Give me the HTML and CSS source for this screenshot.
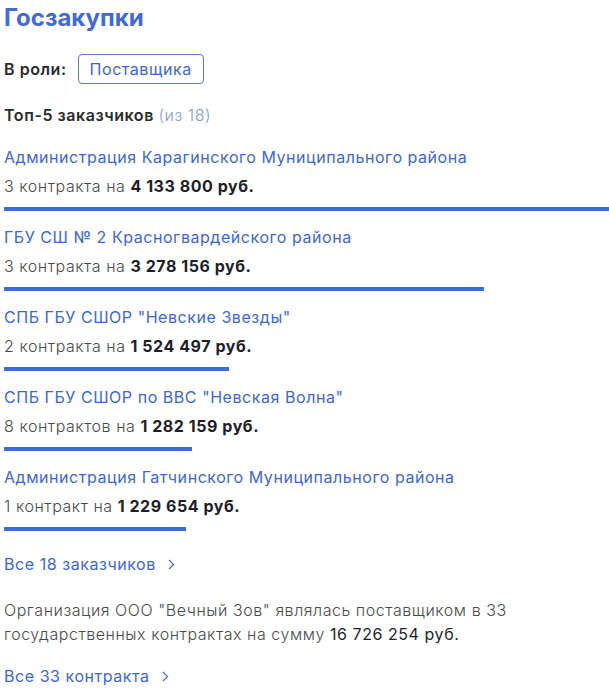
FILE: index.html
```html
<!DOCTYPE html>
<html lang="ru">
<head>
	<meta charset="UTF-8" />
	<meta name="viewport" content="width=device-width, initial-scale=1.0" />
	<title>Госзакупки</title>
	<link rel="stylesheet" href="styles.css">
</head>
<body>
	<div class="zak">
		<h2 class="zak-title">Госзакупки</h2>

		<div class="zak-role">
			<span class="zak-role-label">В роли:</span>
			<span class="zak-role-btn">Поставщика</span>
		</div>

		<div class="zak-top">Топ-5 заказчиков <span class="zak-top-count">(из 18)</span></div>

		<ul class="zak-list">
			<li>
				<a class="zak-name" href="#">Администрация Карагинского Муниципального района</a>
				<div class="zak-sum">3 контракта на <b>4 133 800 руб.</b></div>
				<div class="zak-bar" style="width: 605px"></div>
			</li>
			<li>
				<a class="zak-name" href="#">ГБУ СШ № 2 Красногвардейского района</a>
				<div class="zak-sum">3 контракта на <b>3 278 156 руб.</b></div>
				<div class="zak-bar" style="width: 480px"></div>
			</li>
			<li>
				<a class="zak-name" href="#">СПБ ГБУ СШОР "Невские Звезды"</a>
				<div class="zak-sum">2 контракта на <b>1 524 497 руб.</b></div>
				<div class="zak-bar" style="width: 225px"></div>
			</li>
			<li>
				<a class="zak-name" href="#">СПБ ГБУ СШОР по ВВС "Невская Волна"</a>
				<div class="zak-sum">8 контрактов на <b>1 282 159 руб.</b></div>
				<div class="zak-bar" style="width: 188px"></div>
			</li>
			<li>
				<a class="zak-name" href="#">Администрация Гатчинского Муниципального района</a>
				<div class="zak-sum">1 контракт на <b>1 229 654 руб.</b></div>
				<div class="zak-bar" style="width: 182px"></div>
			</li>
		</ul>

		<a class="zak-more" href="#">Все 18 заказчиков
			<svg width="7" height="11" viewBox="0 0 7 11"><path d="M1 1l4.5 4.5L1 10" fill="none" stroke="#4a6fd6" stroke-width="1.2"/></svg>
		</a>

		<p class="zak-text">Организация ООО "Вечный Зов" являлась поставщиком в 33 государственных контрактах на сумму <span class="zak-dark">16 726 254 руб.</span></p>

		<a class="zak-more zak-more-last" href="#">Все 33 контракта
			<svg width="7" height="11" viewBox="0 0 7 11"><path d="M1 1l4.5 4.5L1 10" fill="none" stroke="#4a6fd6" stroke-width="1.2"/></svg>
		</a>
	</div>
</body>
</html>
```

FILE: styles.css
```css
*{padding: 0;margin: 0;box-sizing: border-box;}
body{font-family: Inter, "Noto Sans", sans-serif;font-size: 16px;line-height: 24px;letter-spacing: 0.55px;color: #4a4a4a;background: #fff;}
a{text-decoration: none;color: #3d67d3;}
.zak{padding: 3px 0 0 4px;}
.zak-title{font-size: 24px;line-height: 30px;font-weight: 700;letter-spacing: 0;color: #3f6bd6;}
.zak-role{display: flex;align-items: center;gap: 11px;margin-top: 21px;}
.zak-role-label{font-weight: 600;color: #2b2b2b;}
.zak-role-btn{display: block;height: 30px;line-height: 28px;padding: 0 11px;border: 1px solid #5a7bd3;border-radius: 4px;color: #3d67d3;}
.zak-top{margin-top: 19px;font-weight: 600;color: #2b2b2b;}
.zak-top-count{font-weight: 300;color: #8599d6;}
.zak-list{list-style: none;margin-top: 18px;}
.zak-list li{margin-bottom: 14px;}
.zak-name{display: block;margin-bottom: 5px;}
.zak-sum{font-weight: 300;}
.zak-sum b{font-weight: 700;color: #1e1e28;}
.zak-bar{height: 4px;margin-top: 9px;background: #3d6bdb;}
.zak-more{display: flex;align-items: center;gap: 12px;margin-top: 21px;}
.zak-text{margin-top: 22px;font-weight: 300;}
.zak-dark{font-weight: 400;color: #1e1e28;}
.zak-more-last{margin-top: 18px;}
```
